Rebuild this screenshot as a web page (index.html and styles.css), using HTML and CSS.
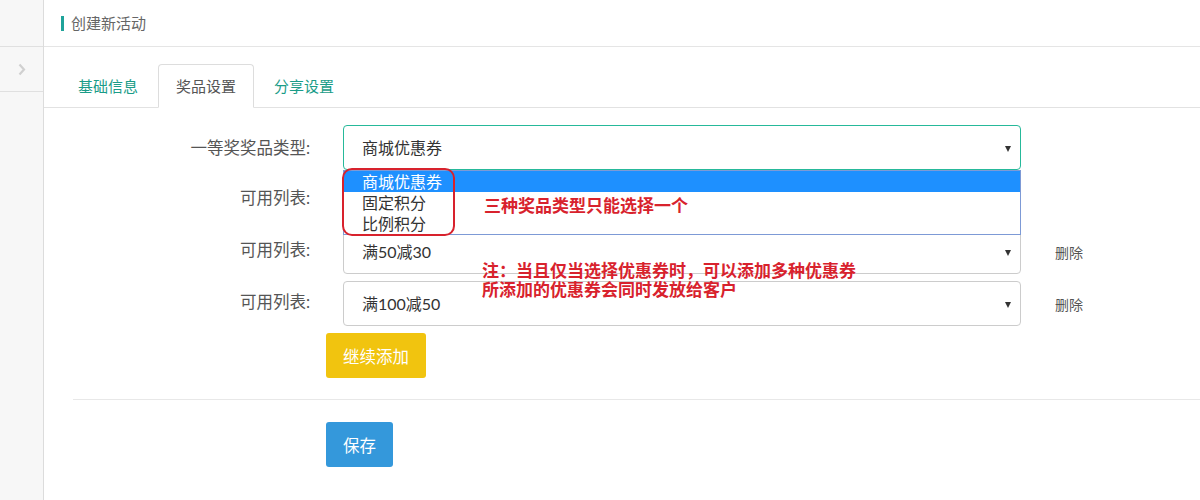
FILE: index.html
```html
<!DOCTYPE html>
<html lang="zh-CN">
<head>
    <meta charset="UTF-8">
    <meta name="viewport" content="width=device-width, initial-scale=1.0">
    <title>创建新活动</title>
    <link rel="stylesheet" href="styles.css">
</head>
<body>
    <div class="app">
        <aside class="sidebar">
            <div class="side-top"></div>
            <div class="side-toggle">
                <svg width="8" height="13" viewBox="0 0 8 13"><polyline points="1.5,1.5 6,6.5 1.5,11.5" fill="none" stroke="#d0d0d0" stroke-width="2.2"/></svg>
            </div>
        </aside>

        <main class="main">
            <div class="page-head">
                <span class="head-title">创建新活动</span>
            </div>

            <div class="tabs">
                <a class="tab">基础信息</a>
                <a class="tab active">奖品设置</a>
                <a class="tab">分享设置</a>
            </div>

            <form class="prize-form" onsubmit="return false">
                <div class="form-row">
                    <label class="form-label">一等奖奖品类型:</label>
                    <div class="select focus">商城优惠券<span class="caret"></span></div>
                </div>
                <div class="form-row">
                    <label class="form-label">可用列表:</label>
                    <div class="select"><span class="caret"></span></div>
                </div>
                <div class="form-row">
                    <label class="form-label">可用列表:</label>
                    <div class="select">满50减30<span class="caret"></span></div>
                    <a class="del">删除</a>
                </div>
                <div class="form-row">
                    <label class="form-label">可用列表:</label>
                    <div class="select">满100减50<span class="caret"></span></div>
                    <a class="del">删除</a>
                </div>

                <div class="form-actions">
                    <button class="btn btn-add">继续添加</button>
                </div>
                <div class="divider"></div>
                <div class="form-actions">
                    <button class="btn btn-save">保存</button>
                </div>
            </form>
        </main>

        <!-- open dropdown of the first select -->
        <ul class="options">
            <li class="selected">商城优惠券</li>
            <li>固定积分</li>
            <li>比例积分</li>
        </ul>

        <!-- annotations -->
        <div class="mark"></div>
        <p class="note note-one">三种奖品类型只能选择一个</p>
        <p class="note note-two">注：当且仅当选择优惠券时，可以添加多种优惠券<br>所添加的优惠券会同时发放给客户</p>
    </div>
</body>
</html>
```

FILE: styles.css
```css
body {
    margin: 0;
    padding: 0;
    font-family: Lato, "Noto Sans CJK SC", sans-serif;
    color: #333;
    background: #fff;
}

.app {
    position: relative;
    display: flex;
    height: 500px;
    overflow: hidden;
}

.sidebar {
    width: 43px;
    flex-shrink: 0;
    background: #f7f7f7;
    border-right: 1px solid #dcdcdc;
}

.side-top {
    height: 46px;
    border-bottom: 1px solid #e0e0e0;
}

.side-toggle {
    height: 44px;
    border-bottom: 1px solid #e0e0e0;
    display: flex;
    align-items: center;
    justify-content: center;
}

.main {
    flex: 1;
}

.page-head {
    height: 46px;
    border-bottom: 1px solid #e5e5e5;
    padding-left: 17px;
    display: flex;
    align-items: center;
}

.head-title {
    border-left: 3px solid #1fa39a;
    padding-left: 7px;
    font-size: 15px;
    line-height: 15px;
    color: #666;
}

.tabs {
    display: flex;
    gap: 2px;
    margin-top: 17px;
    padding-left: 16px;
    border-bottom: 1px solid #e2e2e2;
}

.tab {
    height: 42px;
    line-height: 42px;
    padding: 0 17px;
    font-size: 15px;
    color: #1a9c88;
    border: 1px solid transparent;
    border-radius: 4px 4px 0 0;
    margin-bottom: -1px;
}

.tab.active {
    color: #555;
    background: #fff;
    border-color: #ddd;
    border-bottom-color: #fff;
}

.prize-form {
    padding-top: 17px;
}

.form-row {
    display: flex;
    align-items: center;
    margin-bottom: 7px;
}

.form-label {
    width: 299px;
    box-sizing: border-box;
    padding-right: 33px;
    text-align: right;
    font-size: 16.5px;
    color: #555;
    margin-top: -6px;
}

.form-row:first-child .form-label {
    margin-top: -2px;
}

.select {
    position: relative;
    width: 678px;
    height: 45px;
    box-sizing: border-box;
    border: 1px solid #ccc;
    border-radius: 4px;
    padding: 0 18px;
    line-height: 43px;
    font-size: 16px;
    color: #333;
}

.select.focus {
    border-color: #26b99a;
}

.caret {
    position: absolute;
    right: 9px;
    top: 20px;
    border-left: 3.5px solid transparent;
    border-right: 3.5px solid transparent;
    border-top: 6px solid #333;
}

.del {
    margin-left: 34px;
    font-size: 14px;
    color: #555;
}

.form-actions {
    padding-left: 282px;
}

.btn {
    height: 45px;
    border: none;
    border-radius: 3px;
    padding: 0 17px;
    font-family: inherit;
    font-size: 16.5px;
    color: #fff;
}

.btn-add {
    background: #f1c40f;
}

.btn-save {
    background: #3498db;
}

.divider {
    margin: 21px 0 22px 29px;
    border-top: 1px solid #e8e8e8;
}

/* open option list, drawn above the second row */
.options {
    position: absolute;
    left: 343px;
    top: 170px;
    width: 678px;
    box-sizing: border-box;
    margin: 0;
    padding: 0;
    list-style: none;
    background: #fff;
    border: 1px solid #7d9ad6;
    font-family: "Noto Sans CJK SC", sans-serif;
    font-size: 16px;
    color: #333;
}

.options li {
    height: 21px;
    line-height: 21px;
    padding-left: 18px;
}

.options li.selected {
    background: #1e90ff;
    color: #fff;
}

.mark {
    position: absolute;
    left: 342px;
    top: 168px;
    width: 113px;
    height: 68px;
    box-sizing: border-box;
    border: 2px solid #d8222d;
    border-radius: 10px;
}

.note {
    position: absolute;
    margin: 0;
    font-family: "Noto Sans CJK SC", sans-serif;
    font-size: 17px;
    font-weight: bold;
    color: #d8222d;
    line-height: 19px;
}

.note-one {
    left: 484px;
    top: 195px;
}

.note-two {
    left: 482px;
    top: 260px;
}
```
